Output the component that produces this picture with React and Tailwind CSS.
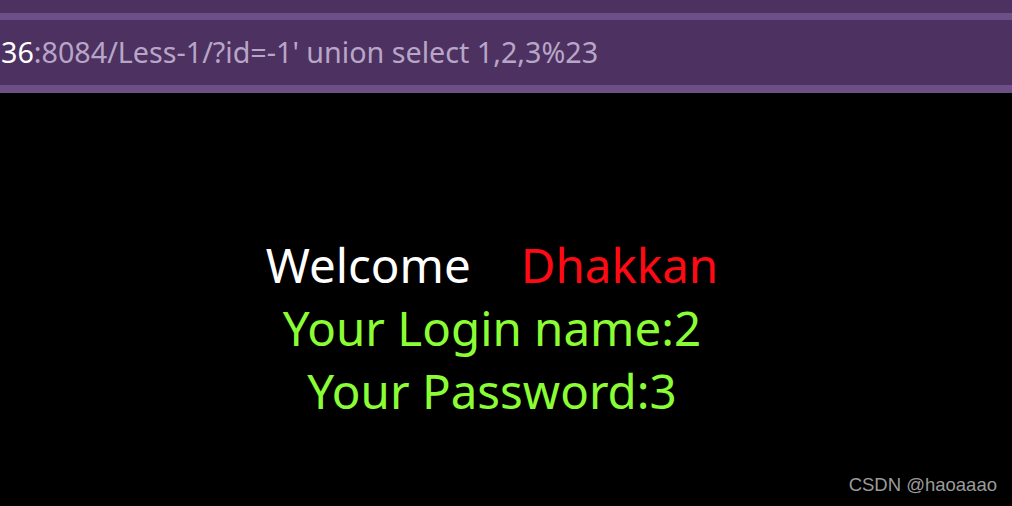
const App = () => {
  return (
    <div className="w-[1012px] h-[506px] bg-black flex flex-col overflow-hidden" style={{ fontFamily: "'Noto Sans', 'Open Sans', sans-serif" }}>
      <div className="h-[13px] bg-[#4d3160]" />
      <div className="h-[7px] bg-[#6c4f86]" />
      <div className="h-[65px] bg-[#4d3160] flex items-center pl-[1px]">
        <span className="text-[28.7px] text-[#b8a6c8] whitespace-nowrap leading-none">
          <span className="text-white">36</span>:8084/Less-1/?id=-1' union select 1,2,3%23
        </span>
      </div>
      <div className="h-[8px] bg-[#6c4f86]" />
      <div className="flex-1 relative flex flex-col items-center pt-[140px] pr-[28px]">
        <div className="text-[47.5px] leading-[63px] text-center">
          <span className="text-white">Welcome</span>
          <span className="text-[#ff0a14] ml-[50px]">Dhakkan</span>
        </div>
        <div className="text-[47.5px] leading-[63px] text-[#8bfd34]">Your Login name:2</div>
        <div className="text-[47.5px] leading-[63px] text-[#8bfd34]">Your Password:3</div>
        <div className="absolute right-[15px] bottom-[7px] text-[18.5px] text-[#9b9b9b]" style={{ fontFamily: "'Liberation Sans', Arial, sans-serif" }}>
          CSDN @haoaaao
        </div>
      </div>
    </div>
  );
};

export default App;
